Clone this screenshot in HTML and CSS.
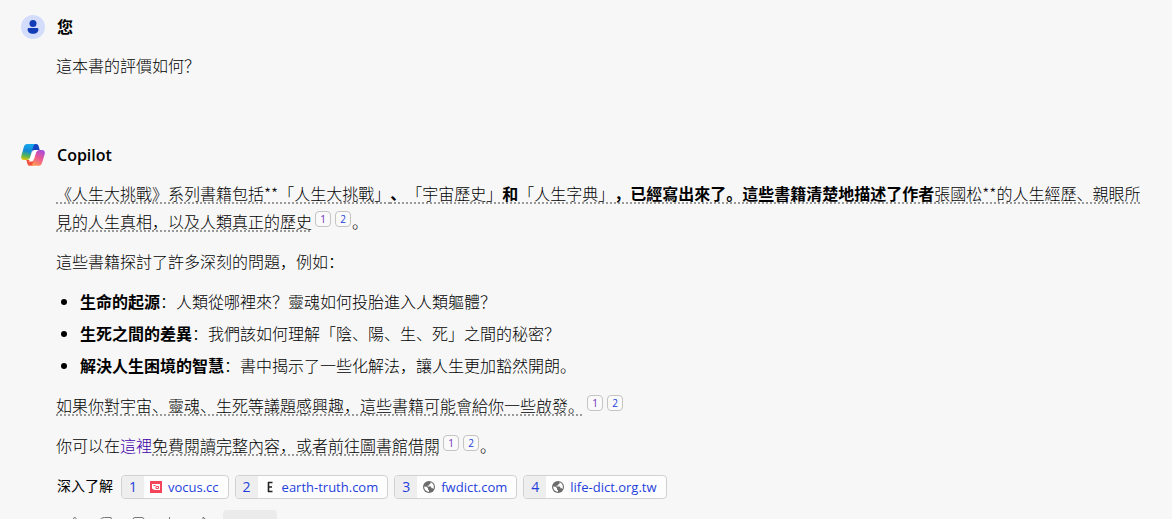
FILE: index.html
```html
<!DOCTYPE html>
<html lang="zh">
<head>
  <meta charset="UTF-8">
  <meta name="viewport" content="width=device-width, initial-scale=1.0">
  <title>Copilot</title>
  <link rel="stylesheet" href="styles.css">
</head>
<body>
  <main class="chat">
    <section class="turn user">
      <header class="turn-head">
        <svg class="avatar" viewBox="0 0 24 24" aria-hidden="true">
          <circle cx="12" cy="12" r="12" fill="#d3dcfa"/>
          <circle cx="12" cy="8.4" r="3.5" fill="#123bb6"/>
          <path d="M8 13h8a1.4 1.4 0 0 1 1.4 1.4c0 2.6-2.4 4.4-5.4 4.4s-5.4-1.8-5.4-4.4A1.4 1.4 0 0 1 8 13z" fill="#123bb6"/>
        </svg>
        <h2>您</h2>
      </header>
      <div class="content">
        <p>這本書的評價如何&#65311;</p>
      </div>
    </section>

    <section class="turn">
      <header class="turn-head">
        <svg class="avatar" viewBox="0 0 24 24" aria-hidden="true">
          <defs>
            <linearGradient id="blue" x1="0.3" y1="0" x2="0.1" y2="1">
              <stop offset="0" stop-color="#15a6ec"/>
              <stop offset="0.4" stop-color="#1489d6"/>
              <stop offset="0.7" stop-color="#52b558"/>
              <stop offset="1" stop-color="#f2c500"/>
            </linearGradient>
            <linearGradient id="pink" x1="0.8" y1="0" x2="0.3" y2="1">
              <stop offset="0" stop-color="#a64be0"/>
              <stop offset="0.5" stop-color="#ec5a90"/>
              <stop offset="1" stop-color="#ff9a52"/>
            </linearGradient>
          </defs>
          <path d="M12 1h3.200c1.200 0 2 .7 2.300 1.800l1.200 4.200h-3.900c-1.500 0-2.400 1-2.800 2.300L10 4z" fill="#1745c2"/>
          <path d="M12 22.700H8.800c-1.200 0-2-.7-2.300-1.800L5.300 17h3.900c1.500 0 2.400-1 2.800-2.300L14 20z" fill="#f3503d"/>
          <path d="M6 1h9c-1.500 0-2.300 1-2.700 2.400L9.200 14c-.6 2-1.700 3-3.500 3H3C.6 17-.3 15.200.3 13L3 3.600C3.500 2 4.500 1 6 1z" fill="url(#blue)"/>
          <path d="M18 22.700H9c1.500 0 2.300-1 2.700-2.400L14.800 10c.6-2 1.700-3 3.500-3H21c2.400 0 3.300 1.800 2.700 4L21 20.100c-.5 1.600-1.500 2.600-3 2.600z" fill="url(#pink)"/>
          <path d="M13.500 7h4c-1.400.5-2.200 1.500-2.700 3l-2.300 7c-.4 1-1 1.500-2 1.500H7.500c.8-.6 1.400-1.500 1.700-2.500l2.100-6.800C11.700 7.800 12.300 7 13.500 7z" fill="#fff"/>
        </svg>
        <h2>Copilot</h2>
      </header>

      <div class="content">
        <p><span class="cited">《人生大挑戰》系列書籍包括**「人生大挑戰」<b>、</b>「宇宙歷史」<b>和</b>「人生字典」<b>&#65292;已經寫出來了。這些書籍清楚地描述了作者</b>張國松**的人生經歷、親眼所見的人生真相&#65292;以及人類真正的歷史</span><a class="cite seen" href="#s1">1</a><a class="cite" href="#s2">2</a>。</p>
        <p>這些書籍探討了許多深刻的問題&#65292;例如&#65306;</p>
        <ul>
          <li><b>生命的起源</b>&#65306;人類從哪裡來&#65311;靈魂如何投胎進入人類軀體&#65311;</li>
          <li><b>生死之間的差異</b>&#65306;我們該如何理解「陰、陽、生、死」之間的秘密&#65311;</li>
          <li><b>解決人生困境的智慧</b>&#65306;書中揭示了一些化解法&#65292;讓人生更加豁然開朗。</li>
        </ul>
        <p><span class="cited">如果你對宇宙、靈魂、生死等議題感興趣&#65292;這些書籍可能會給你一些啟發。</span><a class="cite seen" href="#s1">1</a><a class="cite" href="#s2">2</a></p>
        <p>你可以在<a class="link" href="#here">這裡</a><span class="cited">免費閱讀完整內容&#65292;或者前往圖書館借閱</span><a class="cite seen" href="#s1">1</a><a class="cite" href="#s2">2</a>。</p>
      </div>

      <div class="sources">
        <span class="label">深入了解</span>
        <a class="source" id="s1" href="#vocus">
          <span class="num">1</span>
          <svg viewBox="0 0 12 12" aria-hidden="true"><path d="M0 0h12v12H0z" fill="#f5455c"/><path d="M2 3h8v6H4.500L2 7.500z" fill="#fff"/><path d="M3.500 4.500h2M6 5.500h2.500v2H6z" fill="none" stroke="#f5455c"/></svg>
          vocus.cc
        </a>
        <a class="source" id="s2" href="#earth">
          <span class="num">2</span>
          <svg viewBox="0 0 12 12" aria-hidden="true"><path d="M4 1.500h4.500M4 6h4M4 10.500h4.500M4.500 1v10" fill="none" stroke="#222" stroke-width="1.600"/></svg>
          earth-truth.com
        </a>
        <a class="source" id="s3" href="#fwdict">
          <span class="num">3</span>
          <svg viewBox="0 0 12 12" aria-hidden="true"><circle cx="6" cy="6" r="6" fill="#6b6b6b"/><path d="M1.200 5.500l2.500.3 1.300 1.400v1.300l1 .8v1.500C3.200 10.700 1 8.500 1.200 5.500zM7.500 1.300v1.400l-1.200.6v1.200H4.600v1.100h3.300l.7 1.700h1.200l.7.700C11.600 5.500 10.400 2.300 7.500 1.300z" fill="#fff"/></svg>
          fwdict.com
        </a>
        <a class="source" id="s4" href="#lifedict">
          <span class="num">4</span>
          <svg viewBox="0 0 12 12" aria-hidden="true"><circle cx="6" cy="6" r="6" fill="#6b6b6b"/><path d="M1.200 5.500l2.500.3 1.300 1.400v1.300l1 .8v1.500C3.200 10.700 1 8.500 1.200 5.500zM7.500 1.300v1.400l-1.200.6v1.200H4.600v1.100h3.300l.7 1.700h1.200l.7.700C11.600 5.500 10.400 2.300 7.500 1.300z" fill="#fff"/></svg>
          life-dict.org.tw
        </a>
      </div>

      <div class="actions">
        <button type="button" aria-label="讚"><svg viewBox="0 0 16 16"><path d="M3 9l4-4 1-3.500c2-.5 2.500 1 1.500 4.500h4l-1 7-6 1z"/></svg></button>
        <button type="button" aria-label="不喜歡"><svg viewBox="0 0 16 16"><path d="M1.500 4.500c1-2 3-3 5-3H13l1.500 7H9l-1 5-2-5-4-1z"/></svg></button>
        <button type="button" aria-label="複製"><svg viewBox="0 0 16 16"><rect x="3" y="1.500" width="11" height="12" rx="2"/></svg></button>
        <button type="button" aria-label="匯出"><svg viewBox="0 0 16 16"><path d="M7.500 1v9M4 8l3.500 3.500L11 8"/></svg></button>
        <button type="button" aria-label="分享"><svg viewBox="0 0 16 16"><path d="M9 1l5 4.500-5 4V7.500C5 7.500 3 9 2 12c0-5 3-7.500 7-8z"/></svg></button>
        <button type="button" class="count" aria-label="回應數"></button>
      </div>
    </section>
  </main>
</body>
</html>
```
FILE: styles.css
```css
* {
  box-sizing: border-box;
}

body {
  margin: 0;
  height: 100vh;
  overflow: hidden;
  background: #f7f7f7;
  color: #000;
  font: 300 16px/28px "Noto Sans CJK SC", sans-serif;
  text-spacing-trim: space-all;
}

a {
  color: #1f3fdc;
  text-decoration: none;
}

b {
  font-weight: 700;
}

.chat {
  padding: 13px 22px 0 21px;
}

.turn.user {
  margin-bottom: 62px;
}

.turn-head {
  display: flex;
  align-items: center;
  gap: 12px;
}
.turn-head h2 {
  margin: 0;
  font: 600 16px/28px "Open Sans", "Noto Sans CJK SC", sans-serif;
}

.avatar {
  width: 24px;
  height: 24px;
}

.content {
  padding: 10px 0 0 35px;
}
.content p {
  margin: 0 0 12px;
}
.content ul {
  margin: 0 0 12px;
  padding-left: 24px;
}
.content li + li {
  margin-top: 4px;
}

.cited {
  text-decoration: underline dotted #999 2px;
  text-underline-offset: 2px;
  text-decoration-skip-ink: none;
}

.link {
  color: #4000a8;
}

/* small source numbers after a sentence */
.cite {
  display: inline-block;
  width: 16px;
  height: 16px;
  margin: 0 1px 0 3px;
  border: 1px solid #c4c4c4;
  border-radius: 4px;
  background: #fafafa;
  font: 10px/14px "Open Sans", sans-serif;
  text-align: center;
  vertical-align: 5px;
}
.cite.seen {
  color: #6b2fb8;
}

.sources {
  display: flex;
  gap: 6px;
  padding: 4px 0 0 36px;
  font: 13px/22px "Open Sans", "Noto Sans CJK SC", sans-serif;
}
.sources .label {
  margin-right: 2px;
  font-size: 14px;
}

.source {
  display: flex;
  align-items: center;
  gap: 6px;
  height: 24px;
  padding-right: 9px;
  border: 1px solid #d1d1d1;
  border-radius: 4px;
  background: #fdfdfd;
  overflow: hidden;
}
.source .num {
  width: 22px;
  background: #eee;
  font-size: 14px;
  text-align: center;
}
.source svg {
  width: 12px;
  height: 12px;
}

.actions {
  display: flex;
  gap: 10px;
  padding: 11px 0 0 42px;
}
.actions button {
  width: 22px;
  height: 28px;
  padding: 5px 3px;
  border: 0;
  background: none;
}
.actions svg {
  display: block;
  width: 16px;
  height: 16px;
  fill: none;
  stroke: #777;
}
.actions .count {
  width: 54px;
  border-radius: 4px;
  background: #ebebeb;
}
```
